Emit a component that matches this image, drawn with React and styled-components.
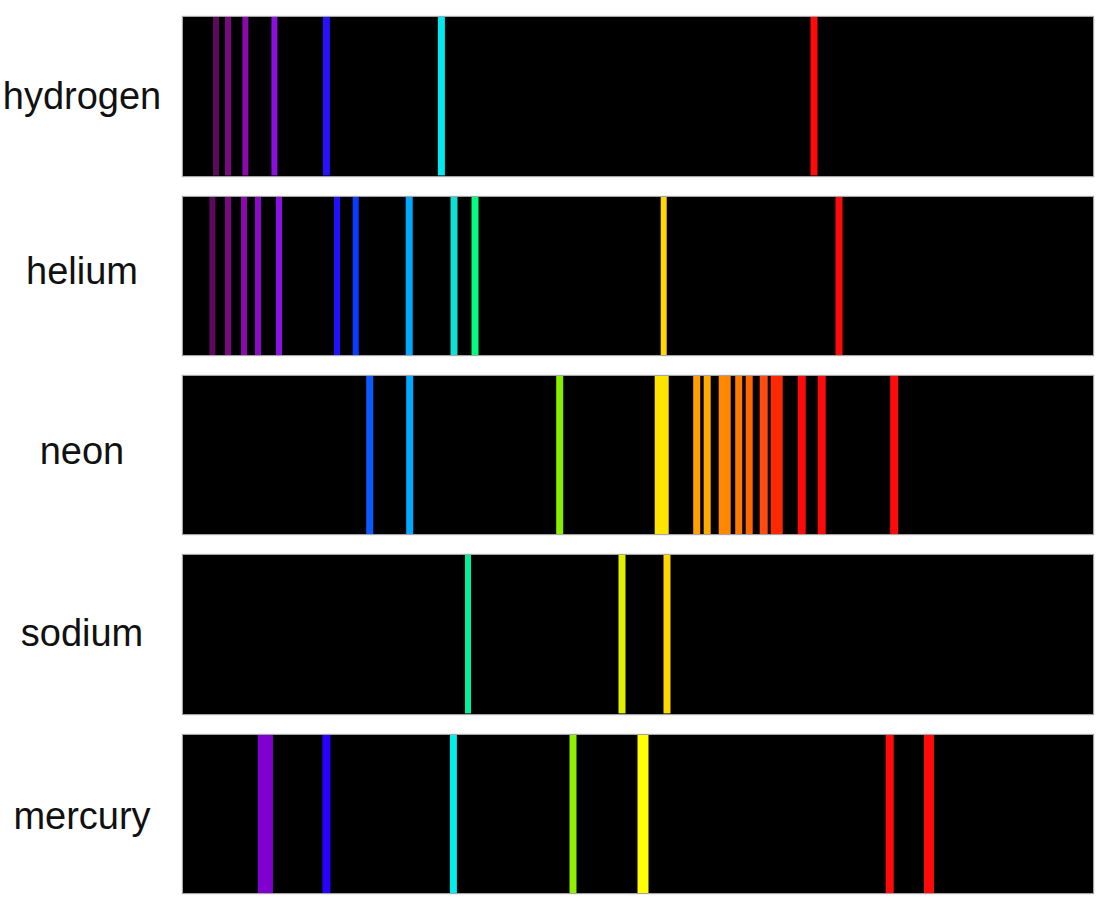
import React from 'react'
import styled, { createGlobalStyle } from 'styled-components'

const X0 = 183.3

// [center x on the page, width, colour]
const spectra = [
  {
    name: 'hydrogen',
    shift: 0,
    lines: [
      [216.3, 6, '#5c0a5c'], [228.3, 6, '#7a0a82'], [245.7, 6, '#8a0aaa'],
      [274.7, 6, '#8a10dc'], [326.7, 7, '#2a10ff'], [441.7, 7, '#00e8f0'],
      [814.3, 7, '#ff0a0a'],
    ],
  },
  {
    name: 'helium',
    shift: -4.5,
    lines: [
      [212.7, 6, '#5c0a5c'], [228.3, 6, '#7a0a82'], [244.3, 6, '#8a0aaa'],
      [258.3, 6, '#8a0ac8'], [279.3, 6, '#8a10e6'], [337.3, 6, '#2010ff'],
      [356, 6, '#0a3cff'], [409.5, 7, '#00a8ff'], [454.3, 7, '#10e0d0'],
      [475.3, 7, '#00ff80'], [664, 6, '#ffd800'], [839.3, 7, '#ff0a0a'],
    ],
  },
  {
    name: 'neon',
    shift: -4,
    lines: [
      [370, 7, '#0a5aff'], [410, 7, '#00a8ff'], [560, 7, '#88ee00'],
      [662, 14, '#ffe400'], [697, 7, '#ffa000'], [707.5, 7, '#ffaa00'],
      [725, 12, '#ff8800'], [739, 7, '#ff7a00'], [749.5, 7, '#ff6600'],
      [764, 8, '#ff4a10'], [777, 12, '#ff2800'], [802, 8, '#ff0a0a'],
      [822, 8, '#ff0a0a'], [894.5, 8, '#ff0a0a'],
    ],
  },
  {
    name: 'sodium',
    shift: -1.5,
    lines: [
      [468.3, 6, '#00f0a0'], [622.3, 7, '#e0f000'], [667.3, 7, '#ffd800'],
    ],
  },
  {
    name: 'mercury',
    shift: 2.5,
    lines: [
      [265.7, 15, '#8000d0'], [326.7, 8, '#2a00ff'], [453.7, 7, '#00f0f0'],
      [573.3, 7, '#90f000'], [643.3, 11, '#ffff00'], [890, 8, '#ff0a0a'],
      [929.3, 10, '#ff0a0a'],
    ],
  },
]

const GlobalStyle = createGlobalStyle`
  html, body {
    margin: 0;
    background: #ffffff;
  }
  body {
    font-family: "Liberation Sans", Arial, sans-serif;
    color: #111;
  }
`

const Page = styled.div`
  width: 1100px;
  height: 908px;
  padding-top: 17.3px;
  box-sizing: border-box;
  display: flex;
  flex-direction: column;
  gap: 20.95px;
`

const Row = styled.div`
  display: grid;
  grid-template-columns: 164px 910px;
  column-gap: 19.3px;
  align-items: center;
  height: 158.4px;
`

const Label = styled.div`
  font-size: 38px;
  text-align: center;
  transform: translateY(${p => p.$shift}px);
`

const Box = styled.div`
  height: 158.4px;
  background: #000;
  box-shadow: 0 0 1px 1px rgba(0, 0, 0, 0.35);
  svg {
    display: block;
    width: 100%;
    height: 100%;
  }
`

const Spectrum = ({ lines }) => (
  <Box>
    <svg viewBox="0 0 910 158" preserveAspectRatio="none">
      {lines.map(([cx, w, color], i) => (
        <rect key={i} x={cx - X0 - w / 2} y="0" width={w} height="158" fill={color} />
      ))}
    </svg>
  </Box>
)

export default function App() {
  return (
    <>
      <GlobalStyle />
      <Page>
        {spectra.map(s => (
          <Row key={s.name}>
            <Label $shift={s.shift}>{s.name}</Label>
            <Spectrum lines={s.lines} />
          </Row>
        ))}
      </Page>
    </>
  )
}
